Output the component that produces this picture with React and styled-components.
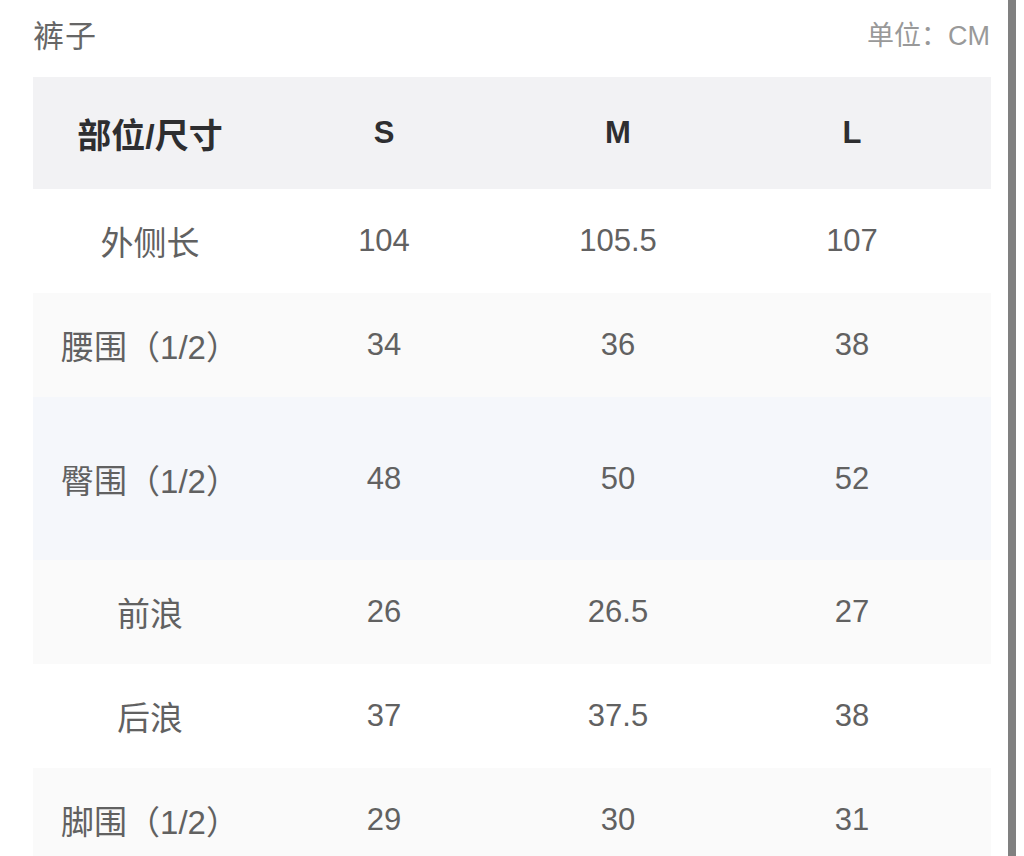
import styled, { createGlobalStyle } from 'styled-components'
import React from 'react'

const GlobalStyle = createGlobalStyle`
  html, body {
    margin: 0;
    padding: 0;
    background: #ffffff;
    font-family: "Liberation Sans", "Noto Sans CJK SC", sans-serif;
  }
`

const rows = [
  { name: '外侧长', values: ['104', '105.5', '107'] },
  { name: '腰围（1/2）', values: ['34', '36', '38'] },
  { name: '臀围（1/2）', values: ['48', '50', '52'], active: true },
  { name: '前浪', values: ['26', '26.5', '27'] },
  { name: '后浪', values: ['37', '37.5', '38'] },
  { name: '脚围（1/2）', values: ['29', '30', '31'] },
]

function App() {
  return (
    <Page>
      <GlobalStyle />
      <Content>
        <TitleBar>
          <Title>裤子</Title>
          <Unit>单位：CM</Unit>
        </TitleBar>
        <Table>
          <HeaderRow>
            <HeadCell $label>部位/尺寸</HeadCell>
            <HeadCell>S</HeadCell>
            <HeadCell>M</HeadCell>
            <HeadCell>L</HeadCell>
          </HeaderRow>
          {rows.map((row, i) => (
            <Row key={row.name} $striped={i % 2 === 1} $active={row.active}>
              <Cell $label>{row.name}</Cell>
              {row.values.map((v, j) => (
                <Cell key={j}>{v}</Cell>
              ))}
            </Row>
          ))}
        </Table>
      </Content>
      <ScrollThumb />
    </Page>
  )
}

export default App

const Page = styled.div`
  display: flex;
  height: 856px;
  overflow: hidden;
`

const Content = styled.div`
  width: 958px;
  padding-left: 33px;
  padding-right: 17px;
`

const TitleBar = styled.div`
  display: flex;
  align-items: center;
  justify-content: space-between;
  height: 77px;
  padding-bottom: 10px;
  box-sizing: border-box;
`

const Title = styled.div`
  font-family: "Noto Sans CJK SC", sans-serif;
  font-size: 31px;
  color: #666666;
  letter-spacing: 1px;
`

const Unit = styled.div`
  font-family: "Liberation Sans", "Noto Sans CJK SC", sans-serif;
  font-size: 27px;
  color: #999999;
  margin-right: 1px;
`

const Table = styled.div`
  display: flex;
  flex-direction: column;
`

const HeaderRow = styled.div`
  display: grid;
  grid-template-columns: repeat(4, 234px);
  align-items: center;
  height: 112px;
  background: #f2f2f4;
`

const HeadCell = styled.div`
  text-align: center;
  font-size: ${p => (p.$label ? '34px' : '31px')};
  font-weight: bold;
  color: #2e2e30;
`

const Row = styled.div`
  display: grid;
  grid-template-columns: repeat(4, 234px);
  align-items: center;
  height: ${p => (p.$active ? '163px' : '104px')};
  background: ${p => (p.$active ? '#f5f7fb' : p.$striped ? '#fafafa' : '#ffffff')};
`

const Cell = styled.div`
  text-align: center;
  font-size: ${p => (p.$label ? '33px' : '31px')};
  color: #616161;
`

const ScrollThumb = styled.div`
  width: 8px;
  height: 856px;
  background: #808080;
`
